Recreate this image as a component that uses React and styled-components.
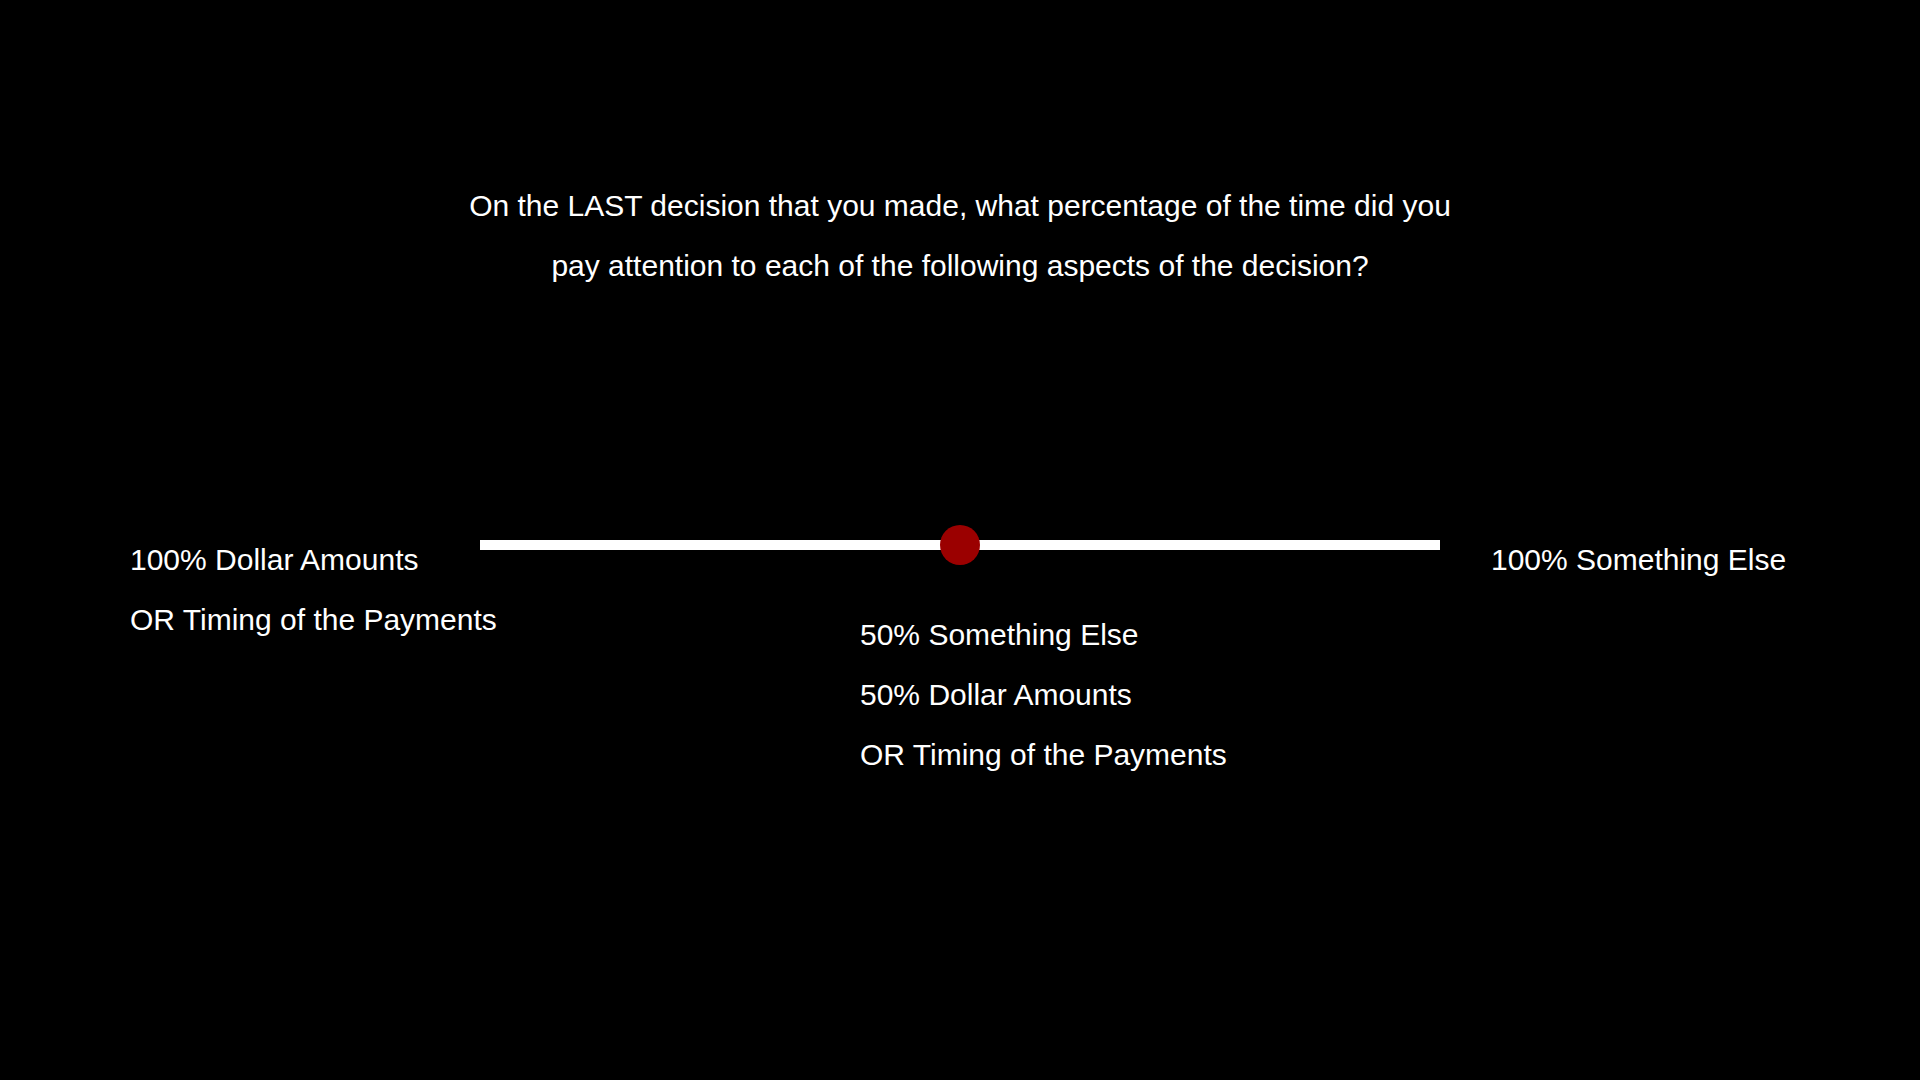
import React from 'react';
import styled, { createGlobalStyle } from 'styled-components';

// ----- style -----

const Global = createGlobalStyle`
    html, body {
        margin: 0;
        padding: 0;
        background: #000;
    }
    body {
        font-family: "Liberation Sans", Arial, sans-serif;
        color: #fff;
    }
`
const Page = styled.div`
    width: 1920px;
    height: 1080px;
    background: #000;
    padding-top: 176px;
    box-sizing: border-box;
    display: flex;
    flex-direction: column;
    align-items: center;
`
const Question = styled.div`
    font-size: 30px;
    line-height: 60px;
    text-align: center;
    margin-bottom: 229px;
`
const Row = styled.div`
    width: 100%;
    display: grid;
    grid-template-columns: 480px 960px 1fr;
    align-items: start;
`
const Label = styled.div`
    font-size: 30px;
    line-height: 60px;
    white-space: nowrap;
    padding-top: ${props => props.top}px;
    padding-left: ${props => props.left}px;
`
const SliderColumn = styled.div`
    display: flex;
    flex-direction: column;
`
const Track = styled.div`
    position: relative;
    height: 40px;
    &::before {
        content: '';
        position: absolute;
        left: 0;
        right: 0;
        top: 15px;
        height: 10px;
        background: #fff;
    }
`
const Thumb = styled.div`
    position: absolute;
    top: 0;
    left: ${props => props.value}%;
    width: 40px;
    height: 40px;
    margin-left: -20px;
    border-radius: 50%;
    background: #9b0000;
`

// ----- komponent -----

const App = () =>
    <>
        <Global />
        <Page>
            <Question>
                On the LAST decision that you made, what percentage of the time did you<br />
                pay attention to each of the following aspects of the decision?
            </Question>
            <Row>
                <Label top={5} left={130}>
                    100% Dollar Amounts<br />
                    OR Timing of the Payments
                </Label>
                <SliderColumn>
                    <Track>
                        <Thumb value={50} />
                    </Track>
                    <Label top={40} left={380}>
                        50% Something Else<br />
                        50% Dollar Amounts<br />
                        OR Timing of the Payments
                    </Label>
                </SliderColumn>
                <Label top={5} left={51}>
                    100% Something Else
                </Label>
            </Row>
        </Page>
    </>

export default App
